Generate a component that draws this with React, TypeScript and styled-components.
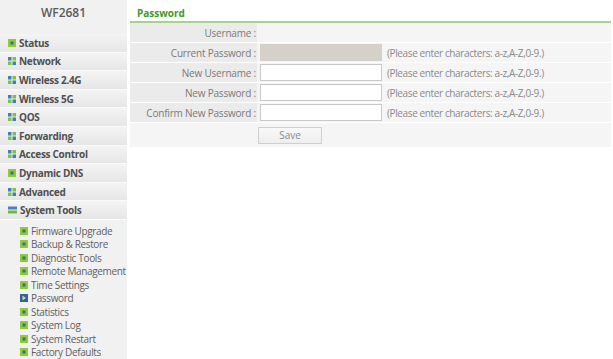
import styled, { createGlobalStyle } from "styled-components";

const GlobalStyle = createGlobalStyle`
  html, body {
    margin: 0;
    padding: 0;
    background: #ffffff;
  }
  body {
    font-family: "Open Sans", "Noto Sans", sans-serif;
    font-size: 10px;
  }
`;

const Page = styled.div`
  display: flex;
  width: 613px;
  height: 359px;
  gap: 3px;
  overflow: hidden;
`;

const Sidebar = styled.nav`
  width: 127px;
  flex: none;
  background: #f1f1f1;
  display: flex;
  flex-direction: column;
`;

const Brand = styled.div`
  height: 34px;
  padding-top: 4px;
  box-sizing: border-box;
  text-align: center;
  font-size: 12px;
  font-weight: 600;
  color: #5a5a5a;
`;

const MenuItem = styled.div`
  height: 18.67px;
  box-sizing: border-box;
  display: flex;
  align-items: center;
  gap: 3px;
  padding-left: 8px;
  border-bottom: 1px solid #fafafa;
  background: linear-gradient(#f4f4f4, #e6e6e6);
  font-weight: bold;
  font-size: 10px;
  letter-spacing: -0.3px;
  color: #505050;
  svg {
    flex: none;
  }
`;

const SubMenu = styled.div`
  display: flex;
  flex-direction: column;
  padding-top: 4px;
`;

const SubItem = styled.div`
  height: 13.5px;
  display: flex;
  align-items: center;
  gap: 3px;
  padding-left: 20px;
  font-size: 10px;
  letter-spacing: -0.35px;
  color: #5f5f5f;
  white-space: nowrap;
  svg {
    flex: none;
  }
`;

const Main = styled.main`
  flex: 1;
  margin-right: 2px;
  display: flex;
  flex-direction: column;
`;

const Title = styled.div`
  height: 23px;
  box-sizing: border-box;
  padding: 6px 0 0 7px;
  font-weight: bold;
  font-size: 10px;
  color: #3f9a1e;
  border-bottom: 2px solid #a6d38a;
`;

const Row = styled.div<{ $tall?: boolean }>`
  display: grid;
  grid-template-columns: 127px 1fr;
  height: ${(p) => (p.$tall ? "24px" : "19px")};
  border-bottom: 1px solid #ffffff;
`;

const Label = styled.div`
  background: #ebebeb;
  display: flex;
  align-items: center;
  justify-content: flex-end;
  padding-right: 1px;
  color: #7a7a7a;
  letter-spacing: -0.2px;
  white-space: nowrap;
`;

const Value = styled.div`
  background: #f5f5f5;
  display: flex;
  align-items: center;
  gap: 5px;
  padding-left: 3px;
  color: #8a8a8a;
  letter-spacing: -0.38px;
  white-space: nowrap;
`;

const SaveCell = styled.div`
  background: #f5f5f5;
  display: flex;
  align-items: center;
  padding-left: 1px;
`;

const SaveSpacer = styled.div`
  background: #f5f5f5;
`;

const Input = styled.input`
  width: 122px;
  height: 17px;
  flex: none;
  box-sizing: border-box;
  border: 1px solid #c8c8c8;
  background: #ffffff;
  margin: 0;
  padding: 0 2px;
  font-size: 10px;
  &:disabled {
    background: #d5d1ca;
    border-color: #d5d1ca;
  }
`;

const SaveButton = styled.button`
  width: 64px;
  height: 17px;
  border: 1px solid #cfcfcf;
  background: linear-gradient(#f8f8f8, #eeeeee);
  color: #8a8a8a;
  font-family: "Open Sans", "Noto Sans", sans-serif;
  font-size: 10px;
  padding: 0;
`;

type IconKind = "dot" | "grid" | "bars" | "active";

function Icon({ kind }: { kind: IconKind }) {
  if (kind === "grid") {
    return (
      <svg width="8" height="8" viewBox="0 0 8 8">
        <rect x="0" y="0" width="3.5" height="3.5" fill="#3f7fc1" />
        <rect x="4.5" y="0" width="3.5" height="3.5" fill="#7cc33f" />
        <rect x="0" y="4.5" width="3.5" height="3.5" fill="#7cc33f" />
        <rect x="4.5" y="4.5" width="3.5" height="3.5" fill="#3f7fc1" />
      </svg>
    );
  }
  if (kind === "bars") {
    return (
      <svg width="9" height="8" viewBox="0 0 9 8">
        <rect x="0" y="0.5" width="9" height="3" fill="#4e7fc3" />
        <rect x="0" y="4.5" width="9" height="3" fill="#6dbb3a" />
      </svg>
    );
  }
  if (kind === "active") {
    return (
      <svg width="8" height="8" viewBox="0 0 8 8">
        <rect x="0" y="0" width="8" height="8" fill="#2f5fb0" />
        <path d="M2.5 1.5 L6 4 L2.5 6.5 Z" fill="#d8e33a" />
      </svg>
    );
  }
  return (
    <svg width="8" height="8" viewBox="0 0 8 8">
      <rect x="0" y="0" width="8" height="8" fill="#8fcd2c" />
      <rect x="2.5" y="2.5" width="3" height="3" fill="#3566b3" />
    </svg>
  );
}

const menu: { label: string; icon: IconKind }[] = [
  { label: "Status", icon: "dot" },
  { label: "Network", icon: "grid" },
  { label: "Wireless 2.4G", icon: "grid" },
  { label: "Wireless 5G", icon: "grid" },
  { label: "QOS", icon: "grid" },
  { label: "Forwarding", icon: "grid" },
  { label: "Access Control", icon: "grid" },
  { label: "Dynamic DNS", icon: "dot" },
  { label: "Advanced", icon: "grid" },
  { label: "System Tools", icon: "bars" },
];

const tools = [
  "Firmware Upgrade",
  "Backup & Restore",
  "Diagnostic Tools",
  "Remote Management",
  "Time Settings",
  "Password",
  "Statistics",
  "System Log",
  "System Restart",
  "Factory Defaults",
];

const HINT = "(Please enter characters: a-z,A-Z,0-9.)";

const fields = [
  { label: "Current Password :", disabled: true },
  { label: "New Username :" },
  { label: "New Password :", type: "password" },
  { label: "Confirm New Password :", type: "password" },
];

export default function App() {
  return (
    <>
      <GlobalStyle />
      <Page>
        <Sidebar>
          <Brand>WF2681</Brand>
          {menu.map((m) => (
            <MenuItem key={m.label}>
              <Icon kind={m.icon} />
              {m.label}
            </MenuItem>
          ))}
          <SubMenu>
            {tools.map((t) => (
              <SubItem key={t}>
                <Icon kind={t === "Password" ? "active" : "dot"} />
                {t}
              </SubItem>
            ))}
          </SubMenu>
        </Sidebar>
        <Main>
          <Title>Password</Title>
          <Row>
            <Label>Username :</Label>
            <Value />
          </Row>
          {fields.map((f) => (
            <Row key={f.label}>
              <Label>{f.label}</Label>
              <Value>
                <Input disabled={f.disabled} type={f.type ?? "text"} />
                {HINT}
              </Value>
            </Row>
          ))}
          <Row $tall>
            <SaveSpacer />
            <SaveCell>
              <SaveButton>Save</SaveButton>
            </SaveCell>
          </Row>
        </Main>
      </Page>
    </>
  );
}
